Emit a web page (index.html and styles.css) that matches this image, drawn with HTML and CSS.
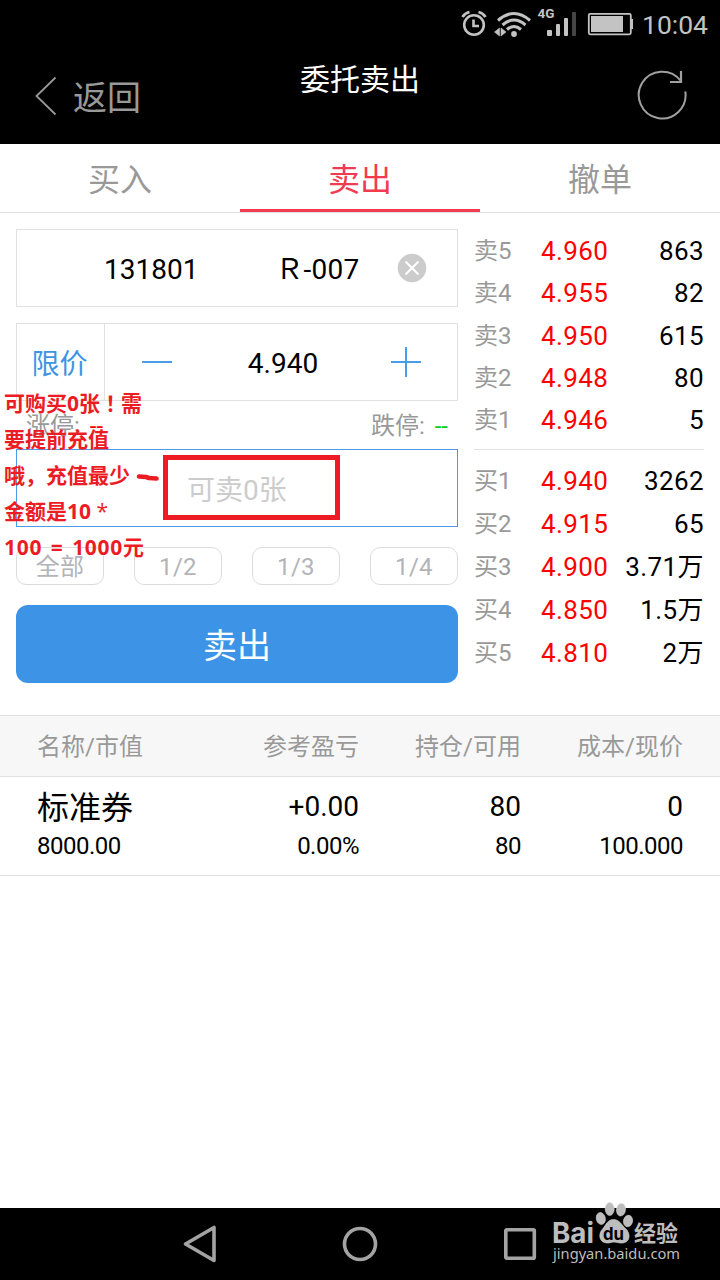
FILE: index.html
```html
<!DOCTYPE html>
<html lang="zh-CN">
<head>
    <meta charset="UTF-8">
    <meta name="viewport" content="width=device-width, initial-scale=1.0">
    <title>委托卖出</title>
    <link rel="stylesheet" href="styles.css">
</head>
<body>
    <div class="status-bar">
        <svg class="status-icons" width="180" height="48" viewBox="0 0 180 48">
            <!-- alarm -->
            <g fill="none" stroke="#c3c3c3" stroke-width="2.6">
                <circle cx="20" cy="25" r="9.8"/>
                <path d="M19.5 19.5V26H25" stroke-width="2.6"/>
                <path d="M8.5 17Q11 13 15.5 12M31.5 17Q29 13 24.5 12" stroke-width="2.8"/>
            </g>
            <!-- wifi -->
            <g fill="none" stroke="#c3c3c3" stroke-width="3">
                <path d="M44 20.5Q60 6.5 76 20.5"/>
                <path d="M48.5 25Q60 15 71.5 25"/>
                <path d="M53 29.5Q60 23.5 67 29.5"/>
            </g>
            <circle cx="60" cy="34" r="2.9" fill="#c3c3c3"/>
            <path d="M45.5 28V36L40.5 32ZM47 28V36L52 32Z" fill="#c3c3c3" stroke="#c3c3c3" stroke-width="0.6"/>
            <!-- signal -->
            <g fill="#c3c3c3">
                <rect x="93" y="30" width="5" height="6" rx="1"/>
                <rect x="102" y="24" width="4" height="12" rx="1"/>
                <rect x="110" y="18" width="4" height="18" rx="1"/>
                <rect x="118" y="12" width="4" height="24" rx="1" fill="#444"/>
            </g>
            <text class="net-type" x="83.5" y="18">4G</text>
            <!-- battery -->
            <rect x="134.8" y="13.8" width="42" height="20.5" rx="1.5" fill="none" stroke="#c3c3c3" stroke-width="1.8"/>
            <rect x="137" y="16" width="32" height="16" fill="#c3c3c3"/>
            <rect x="177" y="19" width="2" height="10" fill="#c3c3c3"/>
        </svg>
        <span class="clock">10:04</span>
    </div>

    <div class="header">
        <div class="back">
            <svg width="22" height="40" viewBox="0 0 22 40"><path d="M20.5 1.5L1.5 20L20.5 38.5" fill="none" stroke="#999" stroke-width="1.8"/></svg>
            <span>返回</span>
        </div>
        <div class="title">委托卖出</div>
        <div class="refresh">
            <svg width="50" height="50" viewBox="0 0 50 50">
                <g fill="none" stroke="#a0a0a0" stroke-width="2">
                    <path d="M48.3 21.5A23.4 23.4 0 1 1 43.5 10.5"/>
                    <path d="M44 1V12H33" stroke-width="2.2"/>
                </g>
            </svg>
        </div>
    </div>

    <div class="tabs">
        <div class="tab">买入</div>
        <div class="tab active">卖出</div>
        <div class="tab">撤单</div>
    </div>

    <div class="trade">
        <div class="form">
            <div class="box stock">
                <span class="code">131801</span>
                <span class="name">Ｒ-007</span>
                <svg width="30" height="30" viewBox="0 0 30 30">
                    <circle cx="15" cy="15" r="14.3" fill="#ccc"/>
                    <path d="M8.5 8.5L21.5 21.5M21.5 8.5L8.5 21.5" stroke="#fff" stroke-width="2"/>
                </svg>
            </div>
            <div class="box price">
                <div class="price-type">限价</div>
                <div class="stepper">
                    <svg width="30" height="30" viewBox="0 0 30 30"><path d="M0 15H30" stroke="#4a9ce8" stroke-width="2"/></svg>
                    <span>4.940</span>
                    <svg width="30" height="30" viewBox="0 0 30 30"><path d="M0 15H30M15 0V30" stroke="#4a9ce8" stroke-width="2"/></svg>
                </div>
            </div>
            <div class="limits">
                <div>涨停: <span class="up">--</span></div>
                <div>跌停: <span class="down">--</span></div>
            </div>
            <div class="box amount">可卖0张</div>
            <div class="chips">
                <div class="chip">全部</div>
                <div class="chip">1/2</div>
                <div class="chip">1/3</div>
                <div class="chip">1/4</div>
            </div>
            <div class="sell-btn">卖出</div>
        </div>

        <div class="book">
            <div class="asks">
                <div class="level"><span>卖5</span><b>4.960</b><i>863</i></div>
                <div class="level"><span>卖4</span><b>4.955</b><i>82</i></div>
                <div class="level"><span>卖3</span><b>4.950</b><i>615</i></div>
                <div class="level"><span>卖2</span><b>4.948</b><i>80</i></div>
                <div class="level"><span>卖1</span><b>4.946</b><i>5</i></div>
            </div>
            <div class="bids">
                <div class="level"><span>买1</span><b>4.940</b><i>3262</i></div>
                <div class="level"><span>买2</span><b>4.915</b><i>65</i></div>
                <div class="level"><span>买3</span><b>4.900</b><i>3.71万</i></div>
                <div class="level"><span>买4</span><b>4.850</b><i>1.5万</i></div>
                <div class="level"><span>买5</span><b>4.810</b><i>2万</i></div>
            </div>
        </div>
    </div>

    <div class="row table-head">
        <div>名称/市值</div>
        <div>参考盈亏</div>
        <div>持仓/可用</div>
        <div>成本/现价</div>
    </div>
    <div class="row holding">
        <div><p class="big cn">标准券</p><p>8000.00</p></div>
        <div><p class="big">+0.00</p><p>0.00%</p></div>
        <div><p class="big">80</p><p>80</p></div>
        <div><p class="big">0</p><p>100.000</p></div>
    </div>

    <div class="nav-bar">
        <svg width="36" height="40" viewBox="0 0 36 40"><path d="M32 3.5V36.5L3.5 20Z" fill="none" stroke="#a3a3a3" stroke-width="3.6" stroke-linejoin="round"/></svg>
        <svg width="36" height="40" viewBox="0 0 36 40"><circle cx="18" cy="20" r="15.5" fill="none" stroke="#a3a3a3" stroke-width="3.6"/></svg>
        <svg width="36" height="40" viewBox="0 0 36 40"><rect x="3.8" y="5.8" width="28.5" height="28.5" rx="1" fill="none" stroke="#a3a3a3" stroke-width="3.6"/></svg>
    </div>

    <!-- red notes over the form -->
    <div class="note">
        <div>可购买0张<span class="mark" lang="zh-TW">！</span>需</div>
        <div>要提前充值</div>
        <div>哦，充值最少</div>
        <div>金额是10 <span class="star">*</span></div>
        <div class="wide">100 = 1000元</div>
    </div>
    <svg class="note-line" width="28" height="12" viewBox="0 0 28 12"><path d="M5 4.5L12 5L15 6L22.5 6.5" fill="none" stroke="#ed1c24" stroke-width="4.6" stroke-linecap="round" stroke-linejoin="round"/></svg>
    <div class="note-frame"></div>

    <!-- site watermark -->
    <svg class="watermark" width="140" height="76" viewBox="0 0 140 76">
        <g fill="#bdbdbd" stroke="#d8d8d8" stroke-width="0.6">
            <ellipse cx="49.8" cy="25.5" rx="4.5" ry="6" transform="rotate(-12 49.8 25.5)"/>
            <ellipse cx="58.7" cy="16" rx="4.5" ry="6.5"/>
            <ellipse cx="70" cy="16.7" rx="4.5" ry="6.3" transform="rotate(8 70 16.7)"/>
            <ellipse cx="77" cy="28" rx="4.5" ry="5.8" transform="rotate(12 77 28)"/>
            <path d="M62.5 26.5C56.5 26.5 55 32 52 35.500C47 40 47.5 49.5 56 50C59 50.3 60 49 63 49C66 49 68.5 50.5 72 50C79.5 49 79.5 40.5 75 36C70.5 32 68.5 26.5 62.5 26.5Z"/>
        </g>
        <text class="wm-logo" x="1" y="49.5" textLength="42" lengthAdjust="spacingAndGlyphs">Bai</text>
        <text class="wm-du" x="52" y="46.5" textLength="21" lengthAdjust="spacingAndGlyphs">du</text>
        <text class="wm-cn" x="83" y="47.5">经验</text>
        <text class="wm-url" x="2" y="65.5" textLength="127" lengthAdjust="spacingAndGlyphs">jingyan.baidu.com</text>
    </svg>
</body>
</html>
```
FILE: styles.css
```css
* {
    box-sizing: border-box;
}
body {
    margin: 0;
    width: 720px;
    height: 1280px;
    position: relative;
    display: flex;
    flex-direction: column;
    overflow: hidden;
    background-color: #fff;
    font-family: Roboto, "Noto Sans CJK SC", sans-serif;
    color: #000;
}
svg {
    display: block;
    flex: none;
}
p {
    margin: 0;
}
.status-bar {
    height: 48px;
    padding-right: 12px;
    display: flex;
    justify-content: flex-end;
    background-color: #000;
    color: #c3c3c3;
}
.status-icons {
    margin-right: 9px;
}
.net-type {
    font: bold 13.5px Roboto, sans-serif;
    fill: #c3c3c3;
}
.clock {
    width: 65px;
    margin-left: -1px;
    margin-right: 1px;
    font-size: 26.5px;
    line-height: 50px;
    white-space: nowrap;
}
.header {
    height: 96px;
    padding: 0 33px 0 35px;
    display: flex;
    align-items: center;
    background-color: #000;
}
.back {
    flex: 1;
    display: flex;
    align-items: center;
    gap: 16px;
    color: #999;
    font-size: 34px;
    line-height: 48px;
    white-space: nowrap;
}
.back span {
    padding-top: 3px;
}
.title {
    margin-left: -2px;
    padding-bottom: 32px;
    color: #fff;
    font-size: 30px;
    line-height: 36px;
}
.refresh {
    flex: 1;
    padding-bottom: 2px;
    display: flex;
    justify-content: flex-end;
}
.tabs {
    height: 69px;
    display: flex;
    border-bottom: 1px solid #e1e1e1;
}
.tab {
    width: 240px;
    height: 68px;
    text-align: center;
    font-size: 32px;
    line-height: 72px;
    color: #999;
}
.tab.active {
    color: #f23b50;
    border-bottom: 3px solid #f23b50;
}
.trade {
    height: 502px;
    padding: 16px 16px 0;
    display: flex;
    gap: 16px;
}
.form {
    width: 442px;
}
.box {
    height: 78px;
    border: 1px solid #e1e1e1;
    font-size: 28px;
}
.stock {
    padding: 0 30px 0 87px;
    display: flex;
    align-items: center;
    line-height: 78px;
}
.stock .code {
    padding-top: 4px;
}
.stock .name {
    margin-left: 77px;
    margin-right: auto;
    padding-top: 3px;
    letter-spacing: 0.2px;
}
.price {
    margin-top: 16px;
    display: flex;
}
.price-type {
    width: 88px;
    padding-right: 2px;
    border-right: 1px solid #e1e1e1;
    color: #3d94e4;
    text-align: center;
    line-height: 81px;
}
.stepper {
    flex: 1;
    padding: 0 36px 0 37px;
    display: flex;
    align-items: center;
    justify-content: space-between;
}
.stepper span {
    padding: 2px 0 0 3px;
}
.limits {
    height: 48px;
    padding: 0 10px;
    display: flex;
    justify-content: space-between;
    font-size: 24px;
    line-height: 51px;
    color: #999;
}
.up,
.down {
    margin-left: 4px;
    color: #f00;
}
.down {
    color: #00d020;
}
.amount {
    padding-left: 170px;
    border-color: #4a9ce8;
    line-height: 81px;
    color: #ccc;
}
.chips {
    margin-top: 20px;
    display: flex;
    justify-content: space-between;
}
.chip {
    width: 88px;
    height: 38px;
    border: 1px solid #dcdcdc;
    border-radius: 10px;
    text-align: center;
    font-size: 24px;
    line-height: 39px;
    letter-spacing: 0.3px;
    color: #b3b3b8;
}
.sell-btn {
    height: 78px;
    margin-top: 20px;
    border-radius: 12px;
    background-color: #3d94e6;
    color: #fff;
    text-align: center;
    font-size: 34px;
    line-height: 83px;
}
.book {
    width: 230px;
}
.asks {
    height: 221px;
    border-bottom: 1px solid #e1e1e1;
}
.bids {
    padding-top: 10px;
}
.level {
    height: 42.3px;
    display: flex;
    line-height: 45px;
    font-size: 26px;
    letter-spacing: 0.4px;
}
.bids .level {
    height: 43px;
    line-height: 42.5px;
}
.level span {
    width: 67px;
    font-size: 24px;
    letter-spacing: 0;
    color: #999;
}
.level b {
    font-weight: normal;
    color: #f00;
}
.level i {
    flex: 1;
    font-style: normal;
    text-align: right;
}
.row {
    display: flex;
    padding: 0 37px;
}
.row > div {
    text-align: right;
    width: 162px;
}
.row > div:first-child {
    width: 160px;
    text-align: left;
}
.table-head {
    height: 62px;
    border-top: 1px solid #e1e1e1;
    border-bottom: 1px solid #e1e1e1;
    background-color: #f7f7f7;
    color: #999;
    font-size: 24px;
    line-height: 63px;
}
.holding {
    height: 99px;
    border-bottom: 1px solid #e1e1e1;
    padding-top: 7px;
    font-size: 24px;
    letter-spacing: -0.5px;
}
.holding p {
    line-height: 32px;
}
.holding .big {
    height: 46px;
    font-size: 28px;
    letter-spacing: 0;
    line-height: 46px;
}
.holding .cn {
    font-size: 32px;
    line-height: 49px;
}
.nav-bar {
    height: 72px;
    margin-top: auto;
    padding: 0 182px;
    display: flex;
    align-items: center;
    justify-content: space-between;
    background-color: #000;
}
.note {
    position: absolute;
    left: 4px;
    top: 385px;
    font-family: "Open Sans", "Noto Sans CJK SC", sans-serif;
    font-size: 21px;
    font-weight: bold;
    line-height: 36px;
    color: #ed1c24;
    white-space: nowrap;
}
.note .mark {
    font-family: "Noto Sans CJK TC", sans-serif;
    line-height: 1;
}
.note .star {
    font-weight: normal;
}
.note .wide {
    letter-spacing: 0.7px;
    word-spacing: 2.5px;
}
.note-line {
    position: absolute;
    left: 134px;
    top: 472px;
}
.note-frame {
    position: absolute;
    left: 163px;
    top: 455px;
    width: 177px;
    height: 65px;
    border: 5px solid #ed1c24;
}
.watermark {
    position: absolute;
    left: 551px;
    top: 1193px;
}
.wm-logo {
    font: bold 28px Inter, sans-serif;
    fill: #bdbdbd;
}
.wm-du {
    font: bold 17px Inter, sans-serif;
    fill: #000;
}
.wm-cn {
    font: bold 22px "Noto Sans CJK SC", sans-serif;
    fill: #bdbdbd;
}
.wm-url {
    font: 15px "Noto Sans", sans-serif;
    fill: #bdbdbd;
}
```
